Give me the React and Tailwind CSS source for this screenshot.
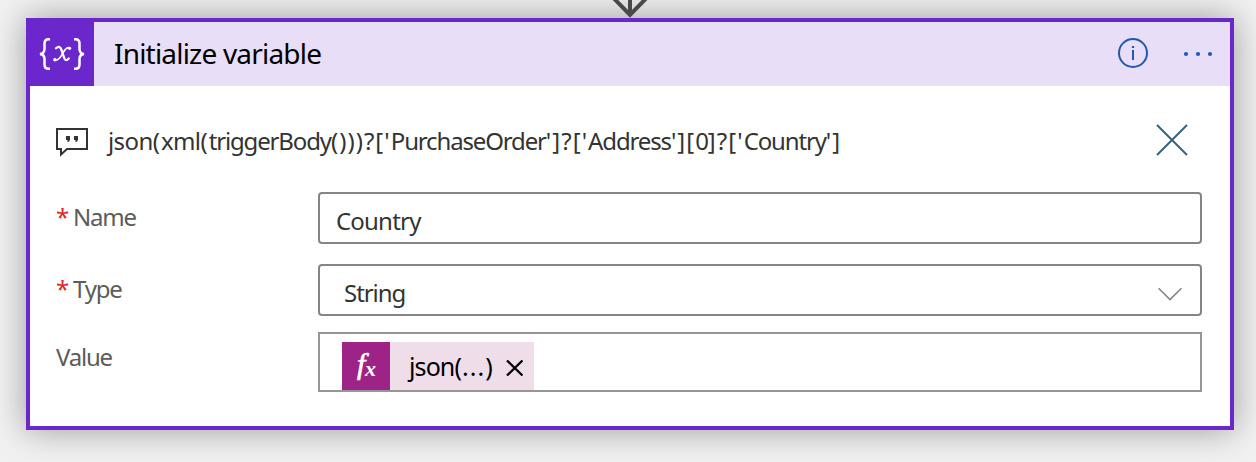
function FlowArrow() {
  return (
    <svg className="absolute left-[606px] top-0 h-[18px] w-12" viewBox="0 0 48 18" fill="none" stroke="#4a4a4a" strokeWidth="4">
      <path d="M24 -2V15M7 -2.5L24 15L41 -2.5" />
    </svg>
  );
}

function CommentIcon() {
  return (
    <svg className="h-[30px] w-8 shrink-0" viewBox="0 0 32 30" fill="none">
      <path d="M1 1H31V21H11L5 26.5V21H1Z" stroke="#333" strokeWidth="2" />
      <path d="M10 8h4v4l-1.5 2h-1v-2H10zM18 8h4v4l-1.5 2h-1v-2H18z" fill="#333" />
    </svg>
  );
}

function Label({ required, children }) {
  return (
    <div className="flex w-[262px] shrink-0 text-[24px] leading-8 tracking-[-1.2px] text-[#5c5c5c]">
      {required && <span className="w-[17px] text-[#e02b2b]">*</span>}
      <span>{children}</span>
    </div>
  );
}

function Word({ loose, children }) {
  return <span className={loose ? "tracking-[-0.6px]" : "tracking-[-1.15px]"}>{children}</span>;
}

function Token() {
  return (
    <div className="flex h-12 w-48 items-center bg-[#f0ddea]">
      <div className="flex h-12 w-12 items-center justify-center bg-[#9e2387]">
        <svg className="h-12 w-12" viewBox="0 0 48 48" fill="#fff" stroke="#fff" strokeWidth="0.7" fontFamily="Liberation Serif, serif" fontStyle="italic">
          <text x="15" y="32" fontSize="30">f</text>
          <text x="23" y="34" fontSize="22" fontWeight="bold" strokeWidth="0">x</text>
        </svg>
      </div>
      <span className="ml-[19px] w-[86px] text-[25px] leading-8 tracking-[0.1px] whitespace-nowrap text-black"><span className="tracking-[-0.9px]">json</span>(<span className="tracking-[1px]">...</span>)</span>
      <svg className="mt-1 ml-[11px] h-4 w-[17px]" viewBox="0 0 17 16" stroke="#000" strokeWidth="2.3">
        <path d="M1 0.5L16.5 15.5M16.5 0.5L1 15.5" />
      </svg>
    </div>
  );
}

export default function App() {
  return (
    <main className="relative h-[462px] w-[1256px] overflow-hidden bg-[#f1f1f1] px-[26px] pt-[18px] font-['Noto_Sans',sans-serif]">
      <section className="h-[412px] w-[1208px] border-4 border-[#6b26cc] bg-white shadow-[0_0_32px_rgba(0,0,0,0.36)]">
        <header className="flex h-16 items-center bg-[#e8def7]">
          <svg className="h-16 w-16 bg-[#6b26cc]" viewBox="0 0 64 64" fill="none">
            <path d="M20 17.2H18.5Q14.5 17.2 14.5 21.5V27Q14.5 31.5 10 32Q14.5 32.5 14.5 37V42.5Q14.5 46.8 18.5 46.8H20M44 17.2H45.5Q49.5 17.2 49.5 21.5V27Q49.5 31.5 54 32Q49.5 32.5 49.5 37V42.5Q49.5 46.8 45.5 46.8H44" stroke="#fff" strokeWidth="2.5" />
            <path d="M26 26.3Q29.5 22.9 31.2 27.2L34.2 36Q35.5 39.8 38.8 36.5" stroke="#fff" strokeWidth="2.3" strokeLinecap="round" />
            <path d="M40.2 26Q36.7 24.2 32.8 31.2Q28.3 39.8 24.4 38" stroke="#fff" strokeWidth="1.6" strokeLinecap="round" />
            <circle cx="39.6" cy="26.3" r="1.6" fill="#fff" />
            <circle cx="24.9" cy="37.7" r="1.7" fill="#fff" />
          </svg>
          <h1 className="ml-5 flex-1 pb-0.5 text-[28px] leading-9 tracking-[-0.8px] text-black">Initialize variable</h1>
          <svg className="mr-[33px] h-8 w-8" viewBox="0 0 32 32" fill="none">
            <circle cx="16" cy="15" r="14" stroke="#2259ae" strokeWidth="2" />
            <path d="M16 12V22" stroke="#2259ae" strokeWidth="2" />
            <path d="M16 8V10" stroke="#2259ae" strokeWidth="2.2" />
          </svg>
          <svg className="mr-4 h-8 w-8" viewBox="0 0 32 32" fill="#2259ae">
            <circle cx="4" cy="16" r="2.1" />
            <circle cx="16" cy="16" r="2.1" />
            <circle cx="28" cy="16" r="2.1" />
          </svg>
        </header>
        <div className="flex h-[106px] items-start pt-[38px] pr-[42px] pl-[26px]">
          <div className="pt-1"><CommentIcon /></div>
          <p className="-mt-px ml-5 h-9 flex-1 text-[24px] leading-9 tracking-[1.05px] whitespace-nowrap text-[#333]">
            <Word loose>json</Word>(<Word loose>xml</Word>(<Word>triggerBody</Word>()))?['<Word>PurchaseOrder</Word>']?['<Word>Address</Word>'][<Word>0</Word>]?['<Word>Country</Word>']
          </p>
          <svg className="h-8 w-8" viewBox="0 0 32 32" stroke="#386180" strokeWidth="2">
            <path d="M1 1L31 31M31 1L1 31" />
          </svg>
        </div>
        <div className="flex h-[72px] pr-7 pl-[26px]">
          <div className="pt-[9px]"><Label required>Name</Label></div>
          <div className="flex h-[52px] flex-1 items-center rounded border-2 border-[#858585] px-4 pt-1.5 text-[24px] leading-8 tracking-[-0.8px] text-[#333]">Country</div>
        </div>
        <div className="flex h-[68px] pr-7 pl-[26px]">
          <div className="pt-[9px]"><Label required>Type</Label></div>
          <div className="flex h-[52px] flex-1 items-center justify-between rounded border-2 border-[#858585] pr-[18px] pl-6 text-[24px] leading-8 tracking-[-1.05px] text-[#333]">
            <span className="pt-1.5">String</span>
            <svg className="mt-2 h-[14px] w-6" viewBox="0 0 24 14" fill="none" stroke="#858585" strokeWidth="1.6">
              <path d="M0.6 1.2L12 12.5L23.4 1.2" />
            </svg>
          </div>
        </div>
        <div className="flex pr-7 pl-[26px]">
          <div className="pt-[9px]"><Label>Value</Label></div>
          <div className="h-[60px] flex-1 border-2 border-[#969696] pt-2 pl-[22px]"><Token /></div>
        </div>
      </section>
      <FlowArrow />
    </main>
  );
}
